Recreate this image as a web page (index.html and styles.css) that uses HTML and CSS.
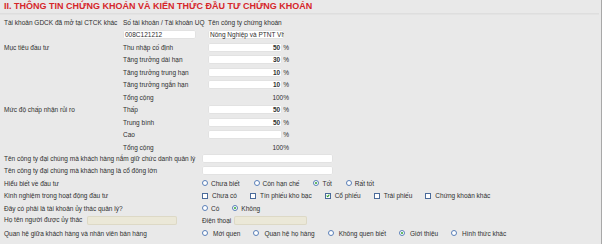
FILE: index.html
```html
<!DOCTYPE html>
<html lang="vi">
<head>
  <meta charset="UTF-8" />
  <title>Thông tin chứng khoán</title>
  <link rel="stylesheet" href="styles.css">
</head>
<body>
  <div class="panel">
    <h2 class="title">II. THÔNG TIN CHỨNG KHOÁN VÀ KIẾN THỨC ĐẦU TƯ CHỨNG KHOÁN</h2>

    <!-- tai khoan o cong ty khac -->
    <div class="grid3">
      <div class="row">
        <span class="lbl">Tài khoản GDCK đã mở tại CTCK khác</span>
        <span class="sub">Số tài khoản / Tài khoản UQ</span>
        <span class="sub">Tên công ty chứng khoán</span>
      </div>
      <div class="row">
        <span class="lbl"></span>
        <span class="sub"><span class="box acc">008C121212</span></span>
        <span class="sub"><span class="box comp">Nông Nghiệp và PTNT Vh</span></span>
      </div>

      <div class="row">
        <span class="lbl">Mục tiêu đầu tư</span>
        <span class="sub">Thu nhập cố định</span>
        <span class="pct"><span class="box num">50</span>%</span>
      </div>
      <div class="row">
        <span class="lbl"></span>
        <span class="sub">Tăng trưởng dài hạn</span>
        <span class="pct"><span class="box num">30</span>%</span>
      </div>
      <div class="row">
        <span class="lbl"></span>
        <span class="sub">Tăng trưởng trung hạn</span>
        <span class="pct"><span class="box num">10</span>%</span>
      </div>
      <div class="row">
        <span class="lbl"></span>
        <span class="sub">Tăng trưởng ngắn hạn</span>
        <span class="pct"><span class="box num">10</span>%</span>
      </div>
      <div class="row">
        <span class="lbl"></span>
        <span class="sub">Tổng cộng</span>
        <span class="pct">100%</span>
      </div>

      <div class="row">
        <span class="lbl">Mức độ chấp nhận rủi ro</span>
        <span class="sub">Thấp</span>
        <span class="pct"><span class="box num">50</span>%</span>
      </div>
      <div class="row">
        <span class="lbl"></span>
        <span class="sub">Trung bình</span>
        <span class="pct"><span class="box num">50</span>%</span>
      </div>
      <div class="row">
        <span class="lbl"></span>
        <span class="sub">Cao</span>
        <span class="pct"><span class="box num"></span>%</span>
      </div>
      <div class="row">
        <span class="lbl"></span>
        <span class="sub">Tổng cộng</span>
        <span class="pct">100%</span>
      </div>
    </div>

    <!-- kien thuc dau tu -->
    <div class="grid2">
      <div class="row">
        <span class="lbl">Tên công ty đại chúng mà khách hàng nắm giữ chức danh quản lý</span>
        <span class="box wide"></span>
      </div>
      <div class="row">
        <span class="lbl">Tên công ty đại chúng mà khách hàng là cổ đông lớn</span>
        <span class="box wide"></span>
      </div>
      <div class="row">
        <span class="lbl">Hiểu biết về đầu tư</span>
        <div class="opts level">
          <span class="opt"><i class="radio"></i>Chưa biết</span>
          <span class="opt"><i class="radio"></i>Còn hạn chế</span>
          <span class="opt"><i class="radio on"></i>Tốt</span>
          <span class="opt"><i class="radio"></i>Rất tốt</span>
        </div>
      </div>
      <div class="row">
        <span class="lbl">Kinh nghiệm trong hoạt động đầu tư</span>
        <div class="opts">
          <span class="opt"><i class="check"></i>Chưa có</span>
          <span class="opt"><i class="check"></i>Tín phiếu kho bạc</span>
          <span class="opt"><i class="check on"></i>Cổ phiếu</span>
          <span class="opt"><i class="check"></i>Trái phiếu</span>
          <span class="opt"><i class="check"></i>Chứng khoán khác</span>
        </div>
      </div>
      <div class="row">
        <span class="lbl">Đây có phải là tài khoản ủy thác quản lý?</span>
        <div class="opts">
          <span class="opt"><i class="radio"></i>Có</span>
          <span class="opt"><i class="radio on"></i>Không</span>
        </div>
      </div>
      <div class="row">
        <span class="lbl">Họ tên người được ủy thác <span class="box off name"></span></span>
        <span class="phone">Điện thoại <span class="box off tel"></span></span>
      </div>
      <div class="row">
        <span class="lbl">Quan hệ giữa khách hàng và nhân viên bán hàng</span>
        <div class="opts relation">
          <span class="opt"><i class="radio"></i>Mới quen</span>
          <span class="opt"><i class="radio"></i>Quan hệ họ hàng</span>
          <span class="opt"><i class="radio"></i>Không quen biết</span>
          <span class="opt"><i class="radio on"></i>Giới thiệu</span>
          <span class="opt"><i class="radio"></i>Hình thức khác</span>
        </div>
      </div>
    </div>
  </div>
</body>
</html>
```

FILE: styles.css
```css
body {
  margin: 0;
  padding: 0;
  background: #e9e9e9;
  font-family: 'Liberation Sans', Arial, sans-serif;
  font-size: 6.5px;
  color: #2f2f2f;
}

.panel {
  width: 601px;
  height: 244px;
  border-right: 1px solid #a8a8a8;
}

.title {
  margin: 0 2px 0 0;
  padding: 1px 0 2px 4px;
  height: 10px;
  font-size: 9px;
  font-weight: bold;
  color: #d6262b;
  white-space: nowrap;
  border-bottom: 1px solid #dedede;
  box-shadow: 0 1px 0 #e3e3e3;
}

.row {
  display: flex;
  align-items: center;
  height: 12.5px;
  white-space: nowrap;
}

.grid3 {
  padding-top: 2px;
}

.grid3 .lbl {
  width: 119px;
  padding-left: 4px;
}

.grid3 .sub {
  width: 85px;
}

.box {
  display: inline-block;
  height: 9px;
  line-height: 9px;
  background: #fff;
  border-radius: 2px;
  box-shadow: inset 0 0 0 1px #e2e2e2;
  padding: 0 2px;
  box-sizing: border-box;
  vertical-align: middle;
}

.acc {
  width: 73px;
}

.comp {
  width: 76px;
  overflow: hidden;
}

.pct {
  display: flex;
  align-items: center;
  justify-content: flex-end;
  width: 81px;
}

.num {
  width: 75px;
  text-align: right;
  font-weight: bold;
  margin-right: 1px;
}

.grid2 {
  margin-top: -1.5px;
}

.grid2 .lbl {
  width: 198px;
  padding-left: 4px;
}

.wide {
  width: 131px;
}

.opts {
  display: flex;
  align-items: center;
  gap: 13px;
}

.opts.level {
  gap: 14px;
}

.opt {
  display: flex;
  align-items: center;
}

.radio {
  display: inline-block;
  width: 6px;
  height: 6px;
  border: 1px solid #5a7fb8;
  border-radius: 50%;
  background: #fff;
  box-sizing: border-box;
  margin-right: 3px;
  position: relative;
}

.relation .radio {
  margin-right: 5px;
}

.radio.on::after {
  content: '';
  position: absolute;
  left: 1px;
  top: 1px;
  width: 2px;
  height: 2px;
  border-radius: 50%;
  background: #2fa52f;
}

.check {
  display: inline-block;
  width: 6px;
  height: 6px;
  border: 1px solid #4a6a9a;
  background: #fff;
  box-sizing: border-box;
  margin-right: 4px;
  position: relative;
}

.check.on::after {
  content: '';
  position: absolute;
  left: 1px;
  top: 0;
  width: 1px;
  height: 2px;
  border: solid #2c9a2c;
  border-width: 0 1px 1px 0;
  transform: rotate(40deg);
}

.off {
  background: #ebe8d8;
  box-shadow: inset 0 0 0 1px #ddd9c6;
}

.name {
  width: 90px;
  margin-left: 3px;
}

.phone {
  display: flex;
  align-items: center;
}

.tel {
  width: 73px;
  margin-left: 3px;
}
```
